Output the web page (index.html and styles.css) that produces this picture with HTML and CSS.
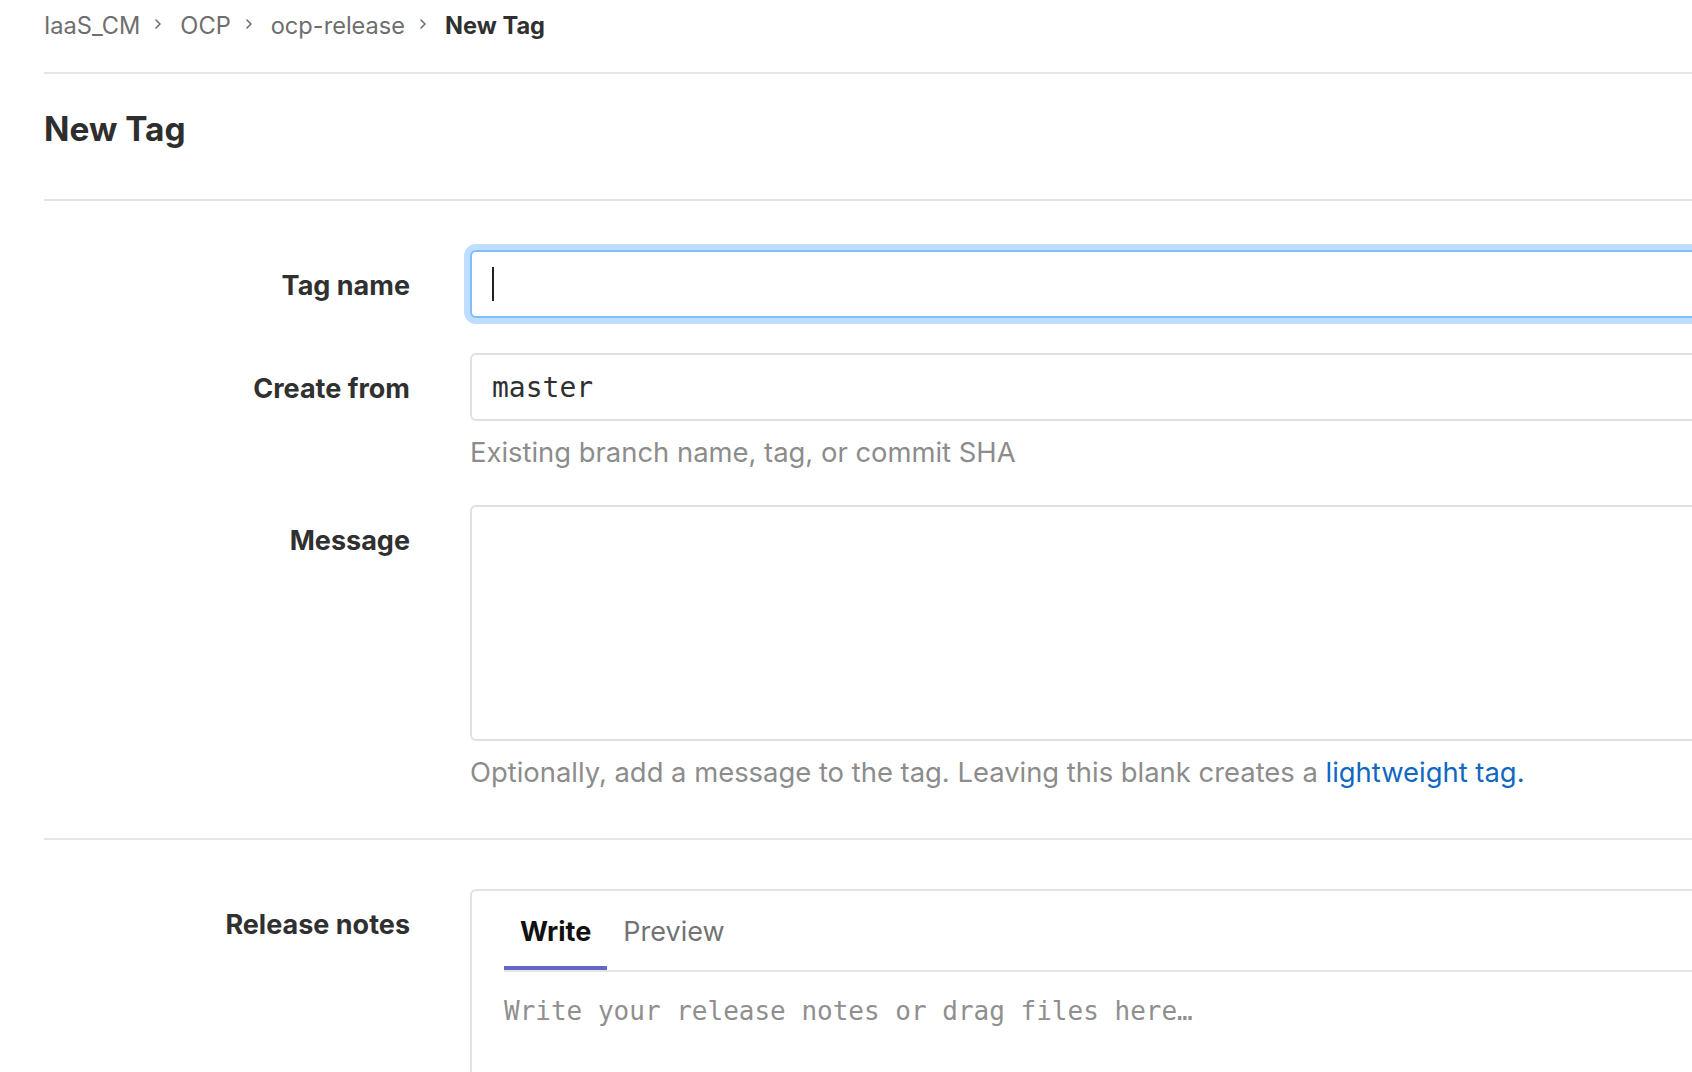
FILE: index.html
```html
<!DOCTYPE html>
<html lang="en">
<head>
<meta charset="utf-8">
<title>New Tag</title>
<link rel="stylesheet" href="styles.css">
</head>
<body>
<div class="page">
  <nav class="breadcrumbs">
    <a class="crumb" href="#">IaaS_CM</a>
    <svg class="chevron" width="10" height="12" viewBox="0 0 10 12"><path d="M3 2 L7 6 L3 10" fill="none" stroke="#707070" stroke-width="1.6" stroke-linecap="round" stroke-linejoin="round"/></svg>
    <a class="crumb" href="#">OCP</a>
    <svg class="chevron" width="10" height="12" viewBox="0 0 10 12"><path d="M3 2 L7 6 L3 10" fill="none" stroke="#707070" stroke-width="1.6" stroke-linecap="round" stroke-linejoin="round"/></svg>
    <a class="crumb" href="#">ocp-release</a>
    <svg class="chevron" width="10" height="12" viewBox="0 0 10 12"><path d="M3 2 L7 6 L3 10" fill="none" stroke="#707070" stroke-width="1.6" stroke-linecap="round" stroke-linejoin="round"/></svg>
    <strong class="crumb current">New Tag</strong>
  </nav>

  <header class="page-header">
    <h1 class="page-title">New Tag</h1>
  </header>

  <form class="tag-form">
    <div class="row">
      <label class="label">Tag name</label>
      <div class="field">
        <div class="input is-focused"><span class="caret"></span></div>
      </div>
    </div>

    <div class="row row-gap">
      <label class="label">Create from</label>
      <div class="field">
        <div class="input mono">master</div>
        <p class="help">Existing branch name, tag, or commit SHA</p>
      </div>
    </div>

    <div class="row row-gap">
      <label class="label">Message</label>
      <div class="field">
        <div class="textarea"></div>
        <p class="help">Optionally, add a message to the tag. Leaving this blank creates a <a class="link" href="#">lightweight tag.</a></p>
      </div>
    </div>

    <div class="divider"></div>

    <div class="row">
      <label class="label">Release notes</label>
      <div class="field">
        <div class="editor">
          <div class="tabs">
            <span class="tab active">Write</span>
            <span class="tab">Preview</span>
          </div>
          <div class="editor-body">Write your release notes or drag files here…</div>
        </div>
      </div>
    </div>
  </form>
</div>
</body>
</html>
```

FILE: styles.css
```css
* { box-sizing: border-box; }

html, body {
  margin: 0;
  padding: 0;
  background: #ffffff;
  overflow: hidden;
}

body {
  font-family: Inter, "Noto Sans", "Liberation Sans", sans-serif;
  color: #303030;
}

.page {
  padding-left: 44px;
  width: calc(100% + 80px);
}

/* Breadcrumbs */
.breadcrumbs {
  display: flex;
  align-items: center;
  height: 74px;
  padding-bottom: 21px;
  border-bottom: 2px solid #e5e5e5;
  font-size: 23.6px;
  line-height: 51px;
}

.crumb {
  color: #6e6e6e;
  text-decoration: none;
}

.crumb.current {
  color: #303030;
  font-weight: 700;
}

.chevron {
  margin: 0 17px 0 13px;
  position: relative;
  top: -2px;
}

/* Header */
.page-header {
  padding: 35px 0 50px;
  border-bottom: 2px solid #e5e5e5;
}

.page-title {
  margin: 0;
  font-size: 33.4px;
  line-height: 40px;
  font-weight: 700;
  color: #2e2e2e;
}

/* Form */
.tag-form {
  padding-top: 49px;
}

.row {
  display: grid;
  grid-template-columns: 366px 1fr;
  column-gap: 60px;
  align-items: start;
}

.row-gap {
  margin-top: 35px;
}

.label {
  text-align: right;
  font-size: 27px;
  font-weight: 700;
  line-height: 64px;
  padding-top: 4px;
  color: #303030;
}

.input {
  height: 68px;
  border: 2px solid #e0e0e0;
  border-radius: 6px;
  padding: 0 20px;
  display: flex;
  align-items: center;
  background: #fff;
}

.input.is-focused {
  border-color: #80bdff;
  box-shadow: 0 0 0 6px #bfdeff;
}

.caret {
  display: block;
  width: 2px;
  height: 34px;
  background: #222;
}

.mono {
  font-family: "DejaVu Sans Mono", "Liberation Mono", monospace;
  font-size: 28px;
  color: #303030;
}

.help {
  margin: 13px 0 0;
  font-size: 27.4px;
  line-height: 36px;
  color: #8c8c8c;
}

.link {
  color: #1068bf;
  text-decoration: none;
}

.textarea {
  height: 236px;
  border: 2px solid #e0e0e0;
  border-radius: 6px;
  background: #fff;
}

.divider {
  height: 2px;
  background: #e5e5e5;
  margin: 48px 0 49px;
}

/* Editor */
.editor {
  border: 2px solid #e3e3e3;
  border-radius: 6px;
  padding: 0 32px;
  min-height: 320px;
}

.tabs {
  display: flex;
  border-bottom: 2px solid #e5e5e5;
}

.tab {
  padding: 25px 16px 18px;
  line-height: 32px;
  font-size: 27px;
  color: #737373;
  border-bottom: 4px solid transparent;
}

.tab.active {
  color: #111;
  font-weight: 700;
  border-bottom-color: #6666c4;
}

.editor-body {
  padding: 21px 0;
  font-family: "DejaVu Sans Mono", "Liberation Mono", monospace;
  font-size: 26px;
  line-height: 36px;
  color: #8f8f8f;
}
```
